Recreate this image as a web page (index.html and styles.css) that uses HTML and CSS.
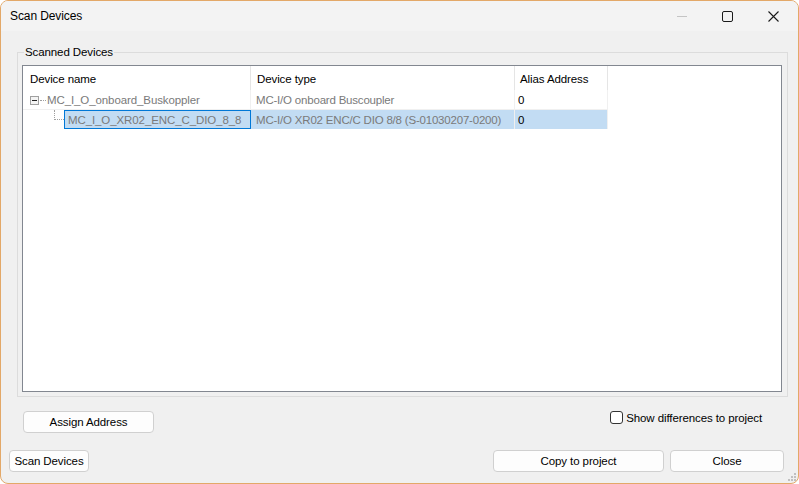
FILE: index.html
```html
<!DOCTYPE html>
<html>
  <head>
    <meta charset="utf-8">
    <title>Scan Devices</title>
    <link rel="stylesheet" href="styles.css">
  </head>
  <body>
    <div class="window">
      <div class="titlebar">
        <span class="title">Scan Devices</span>
        <div class="controls">
          <span class="ctl ctl-min"><span class="min-line"></span></span>
          <span class="ctl ctl-max"><span class="max-box"></span></span>
          <span class="ctl ctl-close">
            <svg width="11" height="11" viewBox="0 0 11 11"><path d="M0.5 0.5 L10.5 10.5 M10.5 0.5 L0.5 10.5" stroke="#1a1a1a" stroke-width="1.1" fill="none"/></svg>
          </span>
        </div>
      </div>

      <fieldset class="group">
        <legend>Scanned Devices</legend>
        <div class="list">
          <div class="row header">
            <div class="cell col-name">Device name</div>
            <div class="cell col-type">Device type</div>
            <div class="cell col-alias">Alias Address</div>
          </div>
          <div class="row">
            <div class="cell col-name">
              <span class="expander"><span class="minus"></span></span>
              <span class="hdots"></span>
              <span class="name-text">MC_I_O_onboard_Buskoppler</span>
            </div>
            <div class="cell col-type dim">MC-I/O onboard Buscoupler</div>
            <div class="cell col-alias">0</div>
          </div>
          <div class="row selected">
            <div class="cell col-name child">
              <span class="branch"></span>
              <span class="name-text focus">MC_I_O_XR02_ENC_C_DIO_8_8</span>
            </div>
            <div class="cell col-type dim">MC-I/O XR02 ENC/C DIO 8/8 (S-01030207-0200)</div>
            <div class="cell col-alias">0</div>
          </div>
        </div>
      </fieldset>

      <div class="action-row">
        <button class="btn btn-assign">Assign Address</button>
        <label class="check">
          <span class="box"></span>
          <span>Show differences to project</span>
        </label>
      </div>

      <div class="bottom-row">
        <button class="btn btn-scan">Scan Devices</button>
        <div class="spacer"></div>
        <button class="btn btn-copy">Copy to project</button>
        <button class="btn btn-close">Close</button>
      </div>

      <svg class="grip" width="10" height="10" viewBox="0 0 10 10">
        <rect x="7" y="1" width="2" height="2" fill="#c0c0c0"/>
        <rect x="4" y="4" width="2" height="2" fill="#c0c0c0"/>
        <rect x="7" y="4" width="2" height="2" fill="#c0c0c0"/>
        <rect x="1" y="7" width="2" height="2" fill="#c0c0c0"/>
        <rect x="4" y="7" width="2" height="2" fill="#c0c0c0"/>
        <rect x="7" y="7" width="2" height="2" fill="#c0c0c0"/>
      </svg>
    </div>
  </body>
</html>
```

FILE: styles.css
```css
* {
  box-sizing: border-box;
}
body {
  margin: 0;
  width: 799px;
  height: 484px;
  background-color: #fff;
  font-family: "Liberation Sans", Arial, sans-serif;
  font-size: 11.5px;
  letter-spacing: -0.1px;
  color: #000;
}
.window {
  position: relative;
  width: 799px;
  height: 484px;
  border: 1px solid #e3a868;
  border-radius: 8px;
  background-color: #f0f0f0;
  overflow: hidden;
  display: flex;
  flex-direction: column;
}
.titlebar {
  height: 30px;
  flex-shrink: 0;
  background-color: #f3f3f3;
  display: flex;
  align-items: center;
  justify-content: space-between;
  padding-left: 9px;
}
.title {
  font-size: 12px;
  margin-top: -1px;
}
.controls {
  display: flex;
  height: 100%;
}
.ctl {
  width: 46px;
  height: 100%;
  display: flex;
  align-items: center;
  justify-content: center;
}
.ctl-min {
  width: 45px;
}
.min-line {
  width: 10px;
  height: 1px;
  background-color: #c4c4c4;
}
.max-box {
  width: 11px;
  height: 11px;
  border: 1px solid #1a1a1a;
  border-radius: 2px;
}
.ctl-close {
  margin-right: 2px;
}

.group {
  margin: 14px 10px 0 16px;
  padding: 6px 5px 4px 4px;
  border: 1px solid #dcdcdc;
  min-width: 0;
}
.group legend {
  padding: 0 1px;
  margin-left: 2px;
  line-height: 14px;
}
.list {
  height: 327px;
  background-color: #fff;
  border: 1px solid #828790;
}
.row {
  display: flex;
  height: 20px;
}
.row.header {
  height: 24px;
}
.cell {
  display: flex;
  align-items: center;
  flex-shrink: 0;
  white-space: nowrap;
  overflow: hidden;
  padding-top: 1px;
  border-right: 1px solid #f0f0f0;
  border-bottom: 1px solid #f0f0f0;
}
.header .cell {
  border-right: 1px solid #e5e5e5;
  border-bottom: none;
  padding-top: 2px;
  padding-left: 7px;
}
.col-name {
  width: 228px;
}
.col-type {
  width: 264px;
  padding-left: 5px;
  letter-spacing: -0.2px;
}
.col-alias {
  width: 93px;
  padding-left: 3px;
}
.header .col-type {
  padding-left: 6px;
  letter-spacing: -0.1px;
}
.header .col-alias {
  padding-left: 5px;
}
.dim,
.name-text {
  color: #7a7a7a;
}
.row .col-name {
  padding-left: 7px;
}
.expander {
  width: 9px;
  height: 9px;
  border: 1px solid #a0a0a0;
  background-color: #f4f4f4;
  display: flex;
  align-items: center;
  justify-content: center;
}
.minus {
  width: 5px;
  height: 1px;
  background-color: #222;
}
.hdots {
  width: 6px;
  margin: 0 1px;
  border-top: 1px dotted #a0a0a0;
}
.child {
  align-items: stretch;
}
.row .col-name.child {
  padding-left: 31px;
  padding-top: 0;
  border-bottom: none;
  border-right: none;
}
.branch {
  width: 10px;
  height: 10px;
  border-left: 1px dotted #a0a0a0;
  border-bottom: 1px dotted #a0a0a0;
  flex-shrink: 0;
}
.name-text.focus {
  flex: 1;
  display: flex;
  align-items: center;
  padding: 1px 0 0 3px;
  height: 19px;
  background-color: #c2dcf3;
  border: 1px solid #0078d7;
}
.selected .col-type,
.selected .col-alias {
  background-color: #c2dcf3;
  height: 19px;
  border-bottom: none;
}

.action-row {
  display: flex;
  align-items: flex-start;
  justify-content: space-between;
  margin: 14px 36px 0 22px;
}
.btn {
  font-family: "Liberation Sans", Arial, sans-serif;
  font-size: 11.5px;
  letter-spacing: -0.1px;
  color: #000;
  height: 22px;
  padding: 0;
  background-color: #fdfdfd;
  border: 1px solid #d0d0d0;
  border-radius: 4px;
}
.btn-assign {
  width: 131px;
}
.check {
  display: flex;
  align-items: center;
  gap: 3px;
}
.box {
  width: 13px;
  height: 13px;
  border: 1px solid #333;
  border-radius: 3px;
  background-color: #fff;
}
.bottom-row {
  display: flex;
  margin: 17px 14px 0 8px;
}
.spacer {
  flex: 1;
}
.btn-scan {
  width: 80px;
}
.btn-copy {
  width: 171px;
  margin-right: 6px;
}
.btn-close {
  width: 114px;
}
.grip {
  position: absolute;
  right: 1px;
  bottom: 1px;
}
```
